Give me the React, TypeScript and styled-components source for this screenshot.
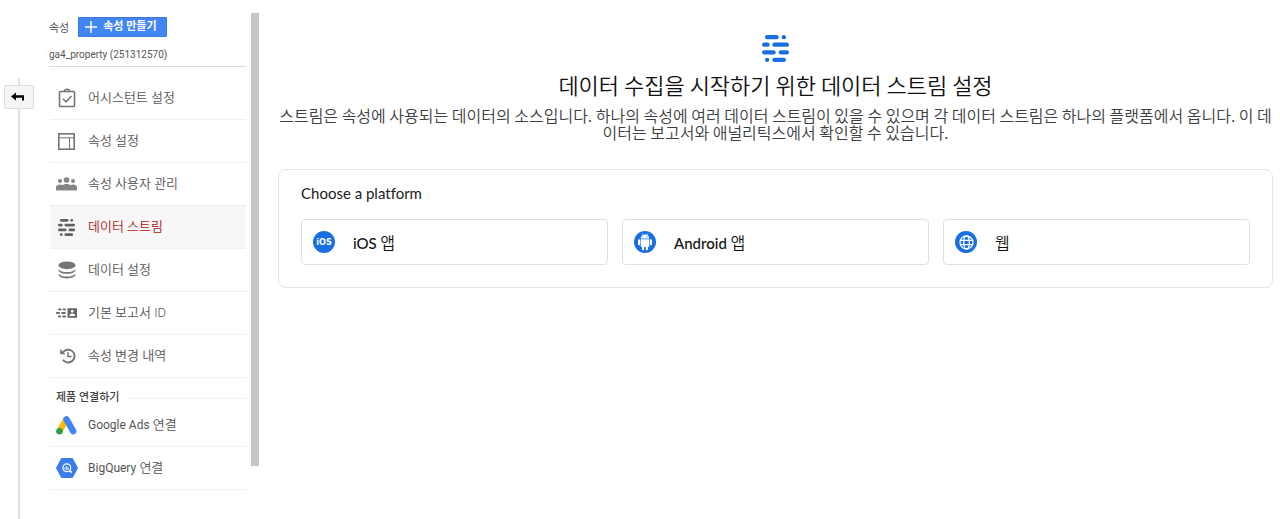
import React from "react";
import styled, { createGlobalStyle } from "styled-components";

const GlobalStyle = createGlobalStyle`
  *, *::before, *::after { box-sizing: border-box; }
  body {
    margin: 0;
    background: #fff;
    color: #202124;
    font-family: Roboto, "Noto Sans CJK KR", sans-serif;
  }
`;

const Page = styled.div`
  display: grid;
  grid-template-columns: 49px 202px 8px minmax(0, 1fr);
  min-height: 100vh;
`;

const Rail = styled.div`
  display: flex;
  flex-direction: column;
  align-items: center;
  padding: 78px 12px 0 0;
`;

const RailLine = styled.span<{ $grow?: boolean }>`
  width: 2px;
  height: 7px;
  flex: ${(p) => (p.$grow ? "1 0 auto" : "none")};
  background: #e2e2e2;
`;

const BackButton = styled.button`
  display: flex;
  align-items: center;
  justify-content: center;
  width: 30px;
  height: 24px;
  padding: 0 2px 0 0;
  border: 1px solid #dcdcdc;
  border-radius: 2px;
  background: #f5f5f5;
  color: #000;
  cursor: pointer;
`;

const Sidebar = styled.aside`
  padding: 17px 5px 16px 0;
`;

const SidebarHeader = styled.div`
  display: flex;
  align-items: center;
  gap: 9px;
  height: 20px;
  font-size: 11px;
  font-weight: 350;
  color: #444;
`;

const CreateButton = styled.button`
  display: flex;
  align-items: center;
  gap: 6px;
  height: 20px;
  padding: 0 9px 0 6px;
  border: 1px solid #3a78e0;
  border-radius: 1px;
  background: #4285f4;
  color: #fff;
  font: 700 11px/16px Roboto, "Noto Sans CJK KR", sans-serif;
  white-space: nowrap;
  cursor: pointer;
`;

const PropertyButton = styled.button`
  display: block;
  width: 100%;
  height: 30px;
  padding: 6px 0 0;
  border: 0;
  border-bottom: 1px solid #dadada;
  background: none;
  color: #555;
  font: 400 10px/16px Roboto, sans-serif;
  text-align: left;
  cursor: pointer;
`;

const Menu = styled.nav`
  padding: 10px 0 0 1px;
`;

const MenuLink = styled.a<{ $active?: boolean }>`
  display: flex;
  align-items: center;
  gap: 10px;
  height: 43px;
  padding-left: 5px;
  border-bottom: 1px solid #efefef;
  background: ${(p) => (p.$active ? "#f7f7f7" : "transparent")};
  color: ${(p) => (p.$active ? "#b31412" : "#555")};
  font-size: 13px;
  font-weight: 350;
  line-height: 20px;
  text-decoration: none;
`;

const LatinLabel = styled.span`
  font-size: 12px;
  font-weight: 400;
`;

const IconSlot = styled.span`
  display: flex;
  align-items: center;
  justify-content: center;
  width: 23px;
  height: 23px;
  color: #757575;
`;

const SectionTitle = styled.h2`
  display: flex;
  align-items: center;
  gap: 10px;
  height: 16px;
  margin: 12px 0 0;
  padding-left: 6px;
  color: #424242;
  font-size: 11px;
  font-weight: 500;
  line-height: 16px;

  &::after {
    content: "";
    flex: 1;
    height: 1px;
    background: #efefef;
  }
`;

const LinkGroup = styled.div`
  margin-top: -2px;
`;

const ScrollThumb = styled.div`
  height: 453px;
  margin-top: 13px;
  background: #c6c6c6;
`;

const Main = styled.main`
  display: flex;
  flex-direction: column;
  align-items: center;
  padding: 35px 7px 16px 19px;
`;

const Title = styled.h1`
  margin: 6px 0 0;
  color: #111;
  font: 350 22px/32px "Noto Sans CJK KR", sans-serif;
  text-align: center;
`;

const Description = styled.p`
  margin: 7px 0 0;
  color: #3c4043;
  font: 350 16px/17px "Noto Sans CJK KR", sans-serif;
  text-align: center;
`;

const Card = styled.section`
  align-self: stretch;
  margin-top: 28px;
  padding: 12px 22px 22px;
  border: 1px solid #e4e4e4;
  border-radius: 8px;
`;

const CardTitle = styled.h2`
  margin: 0 0 15px;
  color: #202124;
  font: 400 15px/22px Lato, sans-serif;
  font-variant-ligatures: none;
`;

const Platforms = styled.div`
  display: grid;
  grid-template-columns: repeat(3, minmax(0, 1fr));
  gap: 14px;
`;

const PlatformButton = styled.button`
  display: flex;
  align-items: center;
  gap: 18px;
  height: 46px;
  padding: 0 11px;
  border: 1px solid #e0e0e0;
  border-radius: 4px;
  background: #fff;
  color: #111;
  font: 350 16px/22px "Noto Sans CJK KR", sans-serif;
  text-align: left;
  cursor: pointer;
`;

const PlatformName = styled.span`
  font: 500 15px/22px Lato, sans-serif;
`;

const Badge = styled.span`
  display: flex;
  align-items: center;
  justify-content: center;
  width: 22px;
  height: 22px;
  border-radius: 50%;
  background: #1a6fe0;
  color: #fff;
  font: 700 9px/22px "DejaVu Sans Condensed", "DejaVu Sans", sans-serif;
`;

const StreamIcon = ({ size, color }: { size: number; color: string }) => (
  <svg width={size} height={size} viewBox="0 0 81 81" fill={color} aria-hidden="true">
    <rect x="9" y="0" width="41" height="13" rx="6.5" />
    <rect x="59" y="0" width="13" height="13" rx="6.5" />
    <rect x="0" y="22.500" width="23" height="13" rx="6.5" />
    <rect x="31" y="22.500" width="50" height="13" rx="6.5" />
    <rect x="0" y="45.500" width="41" height="13" rx="6.5" />
    <rect x="50" y="45.500" width="31" height="13" rx="6.5" />
    <rect x="9" y="68" width="13" height="13" rx="6.5" />
    <rect x="31" y="68" width="41" height="13" rx="6.5" />
  </svg>
);

const AssistantIcon = () => (
  <svg width="18" height="20" viewBox="0 0 18 20" fill="none" stroke="currentColor" strokeWidth="1.6" aria-hidden="true">
    <rect x="1.500" y="3.500" width="15" height="15" rx="0.8" />
    <path d="M6.500 3.200a2.500 2 0 0 1 5 0" />
    <path d="M5 10.800l3 3L13.500 8" />
  </svg>
);

const LayoutIcon = () => (
  <svg width="17" height="17" viewBox="0 0 17 17" fill="none" stroke="currentColor" aria-hidden="true">
    <rect x="0.800" y="0.800" width="15.400" height="15.400" strokeWidth="1.600" />
    <path d="M1 4.800h15M11.500 5v11" strokeWidth="1" />
  </svg>
);

const UsersIcon = () => (
  <svg width="21" height="14" viewBox="0 0 21 14" fill="#858585" aria-hidden="true">
    <circle cx="10.500" cy="3" r="2.800" />
    <circle cx="4" cy="4" r="2" />
    <circle cx="17" cy="4" r="2" />
    <path d="M0 13.500V10.300C0 8.400 2 7.600 4 7.600c1 0 1.800.2 2.500.500C7.500 7.400 9 7 10.500 7s3 .4 4 1.100c.7-.3 1.500-.5 2.500-.5 2 0 4 .8 4 2.700v3.200z" />
  </svg>
);

const DatabaseIcon = () => (
  <svg width="18" height="18" viewBox="0 0 18 18" fill="currentColor" aria-hidden="true">
    <ellipse cx="9" cy="4.300" rx="8.500" ry="3.900" />
    <path d="M.5 8.200c1.500 2 5 2.800 8.500 2.800s7-.8 8.500-2.800v.8c0 2.200-3.800 3.800-8.500 3.800S.5 11.200.5 9z" />
    <path d="M.5 12.800c1.500 2 5 2.800 8.500 2.800s7-.8 8.500-2.800v.8c0 2.200-3.800 3.900-8.500 3.900S.5 15.800.5 13.600z" />
  </svg>
);

const ReportIdIcon = () => (
  <svg width="21" height="10" viewBox="0 0 21 10" fill="#666" aria-hidden="true">
    <rect x="2" y="0.400" width="3.600" height="1.900" rx="0.900" />
    <rect x="6.600" y="0.400" width="3.400" height="1.900" rx="0.900" />
    <rect x="0" y="4" width="4" height="1.900" rx="0.900" />
    <rect x="5.200" y="4" width="4.500" height="1.900" rx="0.900" />
    <rect x="2" y="7.600" width="3" height="1.900" rx="0.900" />
    <rect x="6.200" y="7.600" width="3.800" height="1.900" rx="0.900" />
    <path fillRule="evenodd" d="M11.500 0.300H21v9.400h-9.500zM16.250 1.800a1.400 1.400 0 1 0 .01 0zM13.400 8h5.700c0-1.600-1.400-2.400-2.850-2.400S13.400 6.400 13.400 8z" />
  </svg>
);

const HistoryIcon = () => (
  <svg width="19" height="16" viewBox="-3 0 19 16" fill="none" stroke="currentColor" strokeWidth="1.900" aria-hidden="true">
    <path d="M2.700 4.800A6.400 6.400 0 1 1 2.900 11.700" />
    <path d="M.2 1v5.300h5.300z" fill="currentColor" stroke="none" />
    <path d="M8 4.300V8.600h3.600" strokeWidth="1.500" />
  </svg>
);

const AdsIcon = () => (
  <svg width="21" height="19" viewBox="0 0 21 19" fill="none" strokeLinecap="round" aria-hidden="true">
    <path d="M9.800 4L3.800 14.800" stroke="#fbbc04" strokeWidth="6.200" />
    <path d="M10.500 3.400L17.200 15.200" stroke="#4285f4" strokeWidth="6.400" />
    <circle cx="3.500" cy="15.300" r="3.300" fill="#2f9e4c" />
  </svg>
);

const BigQueryIcon = () => (
  <svg width="22" height="20" viewBox="0 0 22 20" fill="none" aria-hidden="true">
    <path d="M6.200 0h9.600a1.500 1.500 0 0 1 1.300.8l4.600 8.400a1.500 1.500 0 0 1 0 1.600l-4.600 8.400a1.500 1.500 0 0 1-1.300.8H6.200a1.500 1.500 0 0 1-1.300-.8L.3 10.800a1.500 1.500 0 0 1 0-1.600L4.900.8A1.500 1.500 0 0 1 6.200 0z" fill="#3b7de9" />
    <circle cx="10.800" cy="9.800" r="3.900" stroke="#fff" strokeWidth="1.200" />
    <path d="M13.600 12.600l2 2" stroke="#fff" strokeWidth="1.600" />
    <path d="M9 9.500v1.800M10.800 8v4M12.500 10v1.300" stroke="#fff" strokeWidth="1.100" />
  </svg>
);

const AndroidIcon = () => (
  <svg width="16" height="18" viewBox="0 0 16 18" fill="#fff" aria-hidden="true">
    <path d="M3.700 5.600a4.300 4.200 0 0 1 8.600 0z" />
    <path d="M5 .6l1.200 2M11 .6l-1.200 2" stroke="#fff" strokeWidth="0.700" />
    <circle cx="6.200" cy="3.800" r="0.500" fill="#1a6fe0" />
    <circle cx="9.800" cy="3.800" r="0.500" fill="#1a6fe0" />
    <path d="M3.700 6.200h8.600v7.100a.8.8 0 0 1-.8.800h-7a.8.8 0 0 1-.8-.800z" />
    <rect x="1" y="6.200" width="2.100" height="6" rx="1" />
    <rect x="12.900" y="6.200" width="2.100" height="6" rx="1" />
    <rect x="5" y="12" width="2.200" height="5.200" rx="1" />
    <rect x="8.800" y="12" width="2.200" height="5.200" rx="1" />
  </svg>
);

const GlobeIcon = () => (
  <svg width="15" height="15" viewBox="0 0 15 15" fill="none" stroke="#fff" strokeWidth="1.300" aria-hidden="true">
    <circle cx="7.500" cy="7.500" r="6.500" />
    <ellipse cx="7.500" cy="7.500" rx="2.800" ry="6.500" />
    <path d="M1.500 5.300h12M1.500 9.700h12" />
  </svg>
);

const BackIcon = () => (
  <svg width="14" height="10" viewBox="0 0 14 10" aria-hidden="true">
    <path d="M0 4.500L5 .5v2.800h8v5.200h-2V5.800H5v2.700z" fill="#000" />
  </svg>
);

const menuItems = [
  { label: "어시스턴트 설정", icon: <AssistantIcon /> },
  { label: "속성 설정", icon: <LayoutIcon /> },
  { label: "속성 사용자 관리", icon: <UsersIcon /> },
  { label: "데이터 스트림", icon: <StreamIcon size={17} color="#616161" />, active: true },
  { label: "데이터 설정", icon: <DatabaseIcon /> },
  { label: "기본 보고서 ID", icon: <ReportIdIcon /> },
  { label: "속성 변경 내역", icon: <HistoryIcon /> },
];

const productItems = [
  { product: "Google Ads", icon: <AdsIcon /> },
  { product: "BigQuery", icon: <BigQueryIcon /> },
];

const platforms = [
  { name: "iOS", suffix: " 앱", icon: "iOS" },
  { name: "Android", suffix: " 앱", icon: <AndroidIcon /> },
  { name: "", suffix: "웹", icon: <GlobeIcon /> },
];

export default function App() {
  return (
    <>
      <GlobalStyle />
      <Page>
        <Rail>
          <RailLine />
          <BackButton type="button" aria-label="뒤로">
            <BackIcon />
          </BackButton>
          <RailLine $grow />
        </Rail>

        <Sidebar>
          <SidebarHeader>
            <span>속성</span>
            <CreateButton type="button">
              <svg width="12" height="12" viewBox="0 0 12 12" stroke="#fff" strokeWidth="1.500" aria-hidden="true">
                <path d="M6 0v12M0 6h12" />
              </svg>
              속성 만들기
            </CreateButton>
          </SidebarHeader>
          <PropertyButton type="button">ga4_property (251312570)</PropertyButton>
          <Menu>
            {menuItems.map((item) => (
              <MenuLink key={item.label} href="#" $active={item.active}>
                <IconSlot>{item.icon}</IconSlot>
                {item.label}
              </MenuLink>
            ))}
            <SectionTitle>제품 연결하기</SectionTitle>
            <LinkGroup>
              {productItems.map((item) => (
                <MenuLink key={item.product} href="#">
                  <IconSlot>{item.icon}</IconSlot>
                  <span>
                    <LatinLabel>{item.product}</LatinLabel> 연결
                  </span>
                </MenuLink>
              ))}
            </LinkGroup>
          </Menu>
        </Sidebar>

        <ScrollThumb />

        <Main>
          <StreamIcon size={27} color="#1a6fe0" />
          <Title>데이터 수집을 시작하기 위한 데이터 스트림 설정</Title>
          <Description>
            스트림은 속성에 사용되는 데이터의 소스입니다. 하나의 속성에 여러 데이터 스트림이 있을 수 있으며 각 데이터
            스트림은 하나의 플랫폼에서 옵니다. 이 데이터는 보고서와 애널리틱스에서 확인할 수 있습니다.
          </Description>
          <Card>
            <CardTitle>Choose a platform</CardTitle>
            <Platforms>
              {platforms.map((platform) => (
                <PlatformButton key={platform.name + platform.suffix} type="button">
                  <Badge>{platform.icon}</Badge>
                  <span>
                    {platform.name && <PlatformName>{platform.name}</PlatformName>}
                    {platform.suffix}
                  </span>
                </PlatformButton>
              ))}
            </Platforms>
          </Card>
        </Main>
      </Page>
    </>
  );
}
